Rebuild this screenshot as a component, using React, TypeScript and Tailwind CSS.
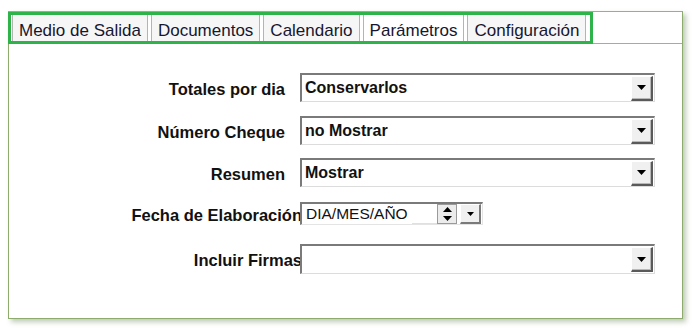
import React from 'react';

const tabs = ['Medio de Salida', 'Documentos', 'Calendario', 'Parámetros', 'Configuración'];

const Arrow = ({ up = false, small = false }: { up?: boolean; small?: boolean }) => (
  <svg width={small ? 7 : 9} height={small ? 4 : 5} viewBox="0 0 9 5" className="block">
    {up ? <polygon points="0,5 9,5 4.5,0" fill="#000" /> : <polygon points="0,0 9,0 4.5,5" fill="#000" />}
  </svg>
);

const DropButton = () => (
  <div className="flex items-center justify-center w-[22px] h-[25px] bg-[#f0f0f0] border-t border-l border-t-white border-l-white border-b-2 border-r-2 border-b-[#5a5a5a] border-r-[#5a5a5a] shadow-[inset_-1px_-1px_0_#b8b8b8]">
    <Arrow />
  </div>
);

const Select = ({ value, h = 'h-[29px]' }: { value: string; h?: string }) => (
  <div
    className={`relative flex items-center justify-between w-[355px] ${h} bg-white border-t-2 border-l-2 border-t-[#7a7a7a] border-l-[#7a7a7a] border-b border-r border-b-[#dcdcdc] border-r-[#dcdcdc]`}
  >
    <span className="pl-[3px] text-[16px] font-bold text-[#111] leading-none">{value}</span>
    <div className="mr-[1px]">
      <DropButton />
    </div>
  </div>
);

const Row = ({ label, wide, children, className }: { label: string; wide?: boolean; children: React.ReactNode; className?: string }) => (
  <div className={`flex items-center ${className ?? ''}`}>
    <div
      className={`${wide ? 'w-[293px]' : 'w-[276px]'} pt-[3px] text-right text-[16.5px] font-bold text-[#111] whitespace-nowrap leading-none`}
    >
      {label}
    </div>
    <div className={wide ? 'ml-[-2px] relative' : 'ml-[15px]'}>{children}</div>
  </div>
);

export default function App() {
  return (
    <div className="relative w-[695px] h-[331px] bg-white pt-[11px] pl-[8px] font-['Liberation_Sans',Arial,sans-serif]">
      <div className="w-[675px] h-[308px] bg-white border border-[#8cab6c] border-t-[#a4a4a4] shadow-[3px_3px_5px_rgba(70,100,50,0.35)]">
        {/* tab strip */}
        <div className="flex items-end h-[32px] border-b border-[#a8a8a8] pl-[3px] gap-[3px]">
          {tabs.map((t) => (
            <div
              key={t}
              className={`h-[29px] flex items-center pt-[3px] px-[6px] border border-b-0 border-[#b4b4b4] text-[17px] leading-none text-[#161630] ${
                t === 'Parámetros' ? 'bg-white' : 'bg-[#f6f6f6]'
              }`}
            >
              {t}
            </div>
          ))}
        </div>

        <div className="pt-[29px]">
          <Row label="Totales por dia">
            <Select value="Conservarlos" />
          </Row>
          <Row label="Número Cheque" className="mt-[14px]">
            <Select value="no Mostrar" />
          </Row>
          <Row label="Resumen" className="mt-[13px]">
            <Select value="Mostrar" />
          </Row>
          <Row label="Fecha de Elaboración" wide className="mt-[15px]">
            <div className="flex items-center w-[183px] h-[23px] bg-white border-t-2 border-l-2 border-t-[#7a7a7a] border-l-[#7a7a7a] border-b border-r border-b-[#e4e4e4] border-r-[#e4e4e4]">
              <span className="pl-[4px] text-[15.5px] text-[#111] leading-none w-[110px]">DIA/MES/AÑO</span>
              <div className="self-end w-[25px] h-[1px] bg-[#e0e0e0]" />
              <div className="flex flex-col w-[20px] h-[20px] bg-[#ececec] border border-[#9a9a9a]">
                <div className="flex-1 flex items-center justify-center">
                  <Arrow up />
                </div>
                <div className="flex-1 flex items-center justify-center">
                  <Arrow />
                </div>
              </div>
              <div className="ml-[3px] flex items-center justify-center w-[21px] h-[20px] bg-[#f0f0f0] border-t border-l border-t-white border-l-white border-b-2 border-r-2 border-b-[#7a7a7a] border-r-[#7a7a7a]">
                <Arrow small />
              </div>
            </div>
          </Row>
          <Row label="Incluir Firmas" wide className="mt-[19px]">
            <Select value="" h="h-[30px]" />
          </Row>
        </div>
      </div>

      {/* green highlight round the tabs */}
      <div className="absolute left-[8px] top-[12px] w-[585px] h-[32px] border-[3px] border-[#2eb34b] pointer-events-none" />
    </div>
  );
}
